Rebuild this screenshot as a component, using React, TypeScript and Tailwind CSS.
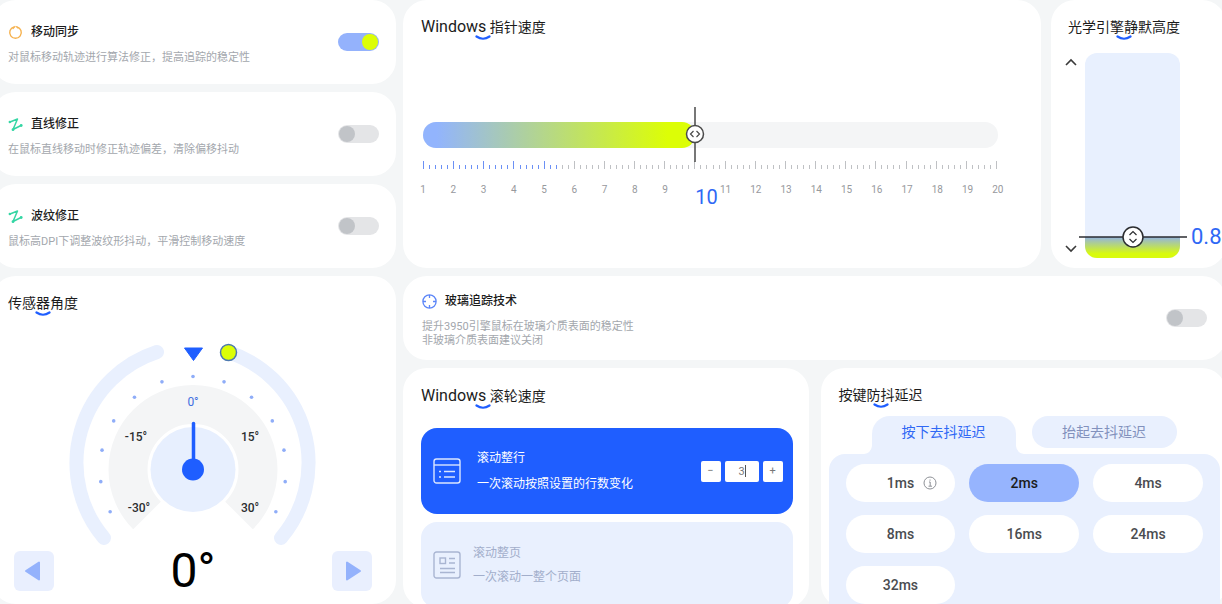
import { useState, type ReactNode } from "react";
import clsx from "clsx";

const SPEED_MIN = 1;
const SPEED_MAX = 20;
const MINOR_TICKS = 5;
const ticks = Array.from({ length: (SPEED_MAX - SPEED_MIN) * MINOR_TICKS + 1 }, (_, index) => index);
const speeds = Array.from({ length: SPEED_MAX }, (_, index) => index + 1);

const delays = ["1ms", "2ms", "4ms", "8ms", "16ms", "24ms", "32ms"];

const dialDots = [-117, -97.5, -78, -58.5, -39, -19.5, 0, 19.5, 39, 58.5, 78, 97.5, 117].map((angle) => {
  const rad = (angle * Math.PI) / 180;
  return { angle, x: 193 + 93 * Math.sin(rad), y: 469.5 - 93 * Math.cos(rad) };
});

export default function App() {
  return (
    <main className="flex h-screen gap-[7px] overflow-hidden bg-[#f4f6f7] font-[Roboto,'Noto_Sans_CJK_SC',sans-serif] text-[#1c1c1c]">
      <div className="-ml-2 flex w-[404px] shrink-0 flex-col gap-2">
        <ToggleCard icon={<SyncIcon />} title="移动同步" description="对鼠标移动轨迹进行算法修正，提高追踪的稳定性" defaultChecked />
        <ToggleCard icon={<LineIcon />} title="直线修正" description="在鼠标直线移动时修正轨迹偏差，清除偏移抖动" />
        <ToggleCard icon={<LineIcon />} title="波纹修正" description="鼠标高DPI下调整波纹形抖动，平滑控制移动速度" />
        <SensorAngle />
      </div>

      <div className="-mr-1 flex min-w-0 flex-1 flex-col gap-2">
        <div className="flex h-[268px] shrink-0 gap-2.5">
          <PointerSpeed />
          <LiftHeight />
        </div>
        <GlassTracking />
        <div className="grid flex-1 grid-cols-2 gap-3">
          <WheelSpeed />
          <Debounce />
        </div>
      </div>
    </main>
  );
}

function Card({ className, children }: { className?: string; children: ReactNode }) {
  return <section className={clsx("rounded-3xl bg-white", className)}>{children}</section>;
}

function CardTitle({ children }: { children: ReactNode }) {
  return (
    <h2 className="relative w-fit text-sm leading-6 whitespace-nowrap">
      {children}
      <svg className="absolute top-5 left-1/2 -ml-2 h-1.5 w-4" viewBox="0 0 16 6" fill="none" aria-hidden="true">
        <path d="M1.5 1.5Q8 6 14.5 1.5" stroke="#1f5eff" strokeWidth="2.2" strokeLinecap="round" />
      </svg>
    </h2>
  );
}

function Switch({ label, defaultChecked }: { label: string; defaultChecked?: boolean }) {
  return (
    <input
      type="checkbox"
      role="switch"
      aria-label={label}
      defaultChecked={defaultChecked}
      className="h-[18px] w-[41px] shrink-0 cursor-pointer appearance-none rounded-full bg-[#e4e5e7] p-px before:block before:size-4 before:rounded-full before:bg-[#c1c4c8] checked:bg-[#94b2fc] checked:before:ml-[23px] checked:before:bg-[#dcfe06]"
    />
  );
}

function ToggleCard({
  icon,
  title,
  description,
  defaultChecked,
}: {
  icon: ReactNode;
  title: string;
  description: ReactNode;
  defaultChecked?: boolean;
}) {
  return (
    <Card className="flex h-[84px] shrink-0 items-center justify-between pr-[17px] pl-4">
      <div className="pt-1">
        <h2 className="flex items-center gap-2 text-xs leading-[18px] font-medium">
          {icon}
          {title}
        </h2>
        <p className="mt-2.5 text-[11px] leading-[14px] text-[#a3a7ad]">{description}</p>
      </div>
      <Switch label={title} defaultChecked={defaultChecked} />
    </Card>
  );
}

function SensorAngle() {
  const [angle, setAngle] = useState(0);

  return (
    <Card className="flex-1 pt-[15px] pr-6 pl-4">
      <CardTitle>传感器角度</CardTitle>
      <div className="mt-[25px] pl-1.5">
        <svg className="mx-auto block h-[208px] w-[266px]" viewBox="60 340 266 208" fill="none" aria-hidden="true">
          <path d="M157 352A116.5 116.5 0 0 0 104 538" stroke="#e9f0fe" strokeWidth="14" strokeLinecap="round" />
          <path d="M228 352A116.5 116.5 0 0 1 281 538" stroke="#e9f0fe" strokeWidth="14" strokeLinecap="round" />
          <path d="M147 515.5A65 65 0 1 1 239 515.5" stroke="#f4f5f6" strokeWidth="39" />
          <circle cx="193" cy="469.5" r="42.5" fill="#e7effe" />
          {dialDots.map((dot) => (
            <circle key={dot.angle} cx={dot.x} cy={dot.y} r="1.8" fill="#8fadf8" />
          ))}
          <path d="M184.5 348H202.5L193.5 360.5Z" fill="#1f5eff" stroke="#1f5eff" strokeLinejoin="round" />
          <circle cx="228.5" cy="352.5" r="8" fill="#dcfe06" stroke="#4c79b0" strokeWidth="1.5" />
          <g transform={`rotate(${angle} 193 469.5)`}>
            <path d="M193.500 423.5V469" stroke="#1f5eff" strokeWidth="3.5" strokeLinecap="round" />
            <circle cx="193" cy="469.5" r="11" fill="#1f5eff" />
          </g>
          <g fill="#2b2d30" fontSize="12" fontWeight="500" textAnchor="middle">
            <text x="193" y="406" fill="#3f6fe0" fontWeight="400">0°</text>
            <text x="136" y="441">-15°</text>
            <text x="250" y="441">15°</text>
            <text x="139" y="512">-30°</text>
            <text x="250" y="512">30°</text>
          </g>
        </svg>
        <div className="mt-[3px] flex h-10 items-center justify-between">
          <AngleButton label="减小角度" path="M12 20L25 11.5V28.5Z" onClick={() => setAngle(Math.max(-30, angle - 1))} />
          <output className="text-5xl leading-10 text-black">{angle}°</output>
          <AngleButton label="增大角度" path="M28 20L15 11.5V28.5Z" onClick={() => setAngle(Math.min(30, angle + 1))} />
        </div>
      </div>
    </Card>
  );
}

function AngleButton({ label, path, onClick }: { label: string; path: string; onClick: () => void }) {
  return (
    <button type="button" aria-label={label} onClick={onClick} className="size-10 rounded-md bg-[#e9effe]">
      <svg viewBox="0 0 40 40" aria-hidden="true">
        <path d={path} fill="#94b2fc" stroke="#94b2fc" strokeWidth="2" strokeLinejoin="round" />
      </svg>
    </button>
  );
}

function PointerSpeed() {
  const [speed, setSpeed] = useState(10);
  const percent = ((speed - SPEED_MIN) / (SPEED_MAX - SPEED_MIN)) * 100;

  return (
    <Card className="min-w-0 flex-1 pt-[15px] pr-[43px] pl-[18px]">
      <CardTitle>
        <span className="text-base">Windows</span> 指针速度
      </CardTitle>
      <div className="mt-[83px] pl-0.5">
        <div className="relative h-[26px] rounded-full bg-[#f4f5f6]">
          <div className="h-full rounded-full bg-linear-to-r/srgb from-[#92b4fd] from-5% to-[#dcfe06] to-90%" style={{ width: `${percent}%` }} />
          <svg
            className="absolute -top-4 -ml-2.5 h-[58px] w-5"
            style={{ left: `${percent}%` }}
            viewBox="0 0 20 58"
            fill="none"
            stroke="#4a4a4a"
            aria-hidden="true"
          >
            <path d="M10 1V56" strokeWidth="1.5" />
            <circle cx="10" cy="28" r="8.5" fill="#fff" strokeWidth="1.5" />
            <path d="M8.500 25L5.500 28L8.500 31M11.500 25L14.500 28L11.500 31" strokeWidth="1.2" />
          </svg>
          <input
            type="range"
            aria-label="Windows 指针速度"
            min={SPEED_MIN}
            max={SPEED_MAX}
            value={speed}
            onChange={(event) => setSpeed(Number(event.target.value))}
            className="absolute inset-0 w-full cursor-pointer opacity-0"
          />
        </div>
        <div className="mt-[13px] flex h-2 items-end justify-between" aria-hidden="true">
          {ticks.map((tick) => (
            <span
              key={tick}
              className={clsx("w-px", tick % MINOR_TICKS === 0 ? "h-2" : "h-1", tick <= 22 ? "bg-[#6b90f5]" : "bg-[#bfc1c4]")}
            />
          ))}
        </div>
        <div className="mt-3 flex justify-between text-[10px] leading-[18px] text-[#97999d]">
          {speeds.map((value) => (
            <span key={value} className={clsx("flex w-0", value === speed ? "justify-start" : "justify-center")}>
              {value === speed ? <strong className="mt-1.5 text-xl leading-5 font-normal text-[#2f68f5]">{value}</strong> : value}
            </span>
          ))}
        </div>
      </div>
    </Card>
  );
}

function LiftHeight() {
  return (
    <Card className="w-[175px] shrink-0 pt-[15px] pl-[17px]">
      <CardTitle>光学引擎静默高度</CardTitle>
      <div className="mt-3.5 -ml-[3px] flex h-[205px] gap-2">
        <div className="flex flex-col justify-between py-[5px]">
          <StepButton label="升高" path="M1 7L6 2L11 7" />
          <StepButton label="降低" path="M1 1L6 6L11 1" />
        </div>
        <div className="relative flex w-[95px] flex-col justify-end">
          <div className="flex h-full flex-col justify-end overflow-hidden rounded-xl bg-[#e8f0fe]">
            <div className="h-[21px] bg-linear-to-b/srgb from-[#93b3e2] to-[#d9fb0c] to-80%" />
          </div>
          <svg className="absolute bottom-2.5 -left-1.5 h-[22px] w-[108px]" viewBox="0 0 108 22" fill="none" stroke="#2b2d30" aria-hidden="true">
            <path d="M0 11H108" strokeWidth="1.5" />
            <circle cx="54" cy="11" r="10" fill="#fff" strokeWidth="1.5" />
            <path d="M50.500 9L54 5.500L57.500 9M50.500 13L54 16.500L57.500 13" strokeWidth="1.2" />
          </svg>
          <output className="absolute bottom-2.5 left-[106px] text-[22px] leading-[22px] text-[#2f68f5]">0.8</output>
        </div>
      </div>
    </Card>
  );
}

function StepButton({ label, path }: { label: string; path: string }) {
  return (
    <button type="button" aria-label={label}>
      <svg className="block h-2 w-3" viewBox="0 0 12 8" fill="none" aria-hidden="true">
        <path d={path} stroke="#3a3a3a" strokeWidth="1.6" />
      </svg>
    </button>
  );
}

function GlassTracking() {
  return (
    <Card className="flex h-[84px] shrink-0 items-center justify-between px-[19px]">
      <div className="pt-1">
        <h2 className="flex items-center gap-2 text-xs leading-[18px] font-medium">
          <TargetIcon />
          玻璃追踪技术
        </h2>
        <p className="mt-2.5 text-[11px] leading-[14px] text-[#a3a7ad]">
          提升3950引擎鼠标在玻璃介质表面的稳定性
          <br />
          非玻璃介质表面建议关闭
        </p>
      </div>
      <Switch label="玻璃追踪技术" />
    </Card>
  );
}

function WheelSpeed() {
  const [lines, setLines] = useState(3);

  return (
    <Card className="pt-4 pr-4 pl-[18px]">
      <CardTitle>
        <span className="text-base">Windows</span> 滚轮速度
      </CardTitle>
      <div className="mt-5 space-y-2">
        <div className="flex h-[86px] items-center justify-between rounded-2xl bg-[#1f5eff] pr-2.5 pl-3 text-white">
          <label className="flex items-center gap-4 text-xs">
            <input type="radio" name="wheel" defaultChecked className="sr-only" />
            <LinesIcon />
            <span className="leading-[18px]">
              滚动整行
              <br />
              <span className="mt-2 block">一次滚动按照设置的行数变化</span>
            </span>
          </label>
          <div className="flex gap-1 text-[11px] text-[#777]">
            <button type="button" aria-label="减少行数" className="h-[21px] w-5 rounded-xs bg-white" onClick={() => setLines(Math.max(1, lines - 1))}>
              −
            </button>
            <div className="relative">
              <input
                aria-label="滚动行数"
                value={lines}
                onChange={(event) => setLines(Number(event.target.value) || 1)}
                className="h-[21px] w-[34px] rounded-xs bg-white text-center outline-none"
              />
              <span className="absolute top-1 left-5 h-3 w-px bg-[#555]" />
            </div>
            <button type="button" aria-label="增加行数" className="h-[21px] w-5 rounded-xs bg-white" onClick={() => setLines(lines + 1)}>
              +
            </button>
          </div>
        </div>
        <label className="flex h-[86px] items-center gap-3 rounded-2xl bg-[#e9f0fe] pl-3 text-xs text-[#a2aecb]">
          <input type="radio" name="wheel" className="sr-only" />
          <PageIcon />
          <span className="leading-[18px]">
            滚动整页
            <br />
            <span className="mt-1.5 block">一次滚动一整个页面</span>
          </span>
        </label>
      </div>
    </Card>
  );
}

function Debounce() {
  const [selected, setSelected] = useState("2ms");

  return (
    <Card className="flex flex-col pt-[15px] pr-1.5 pl-2">
      <div className="pl-2.5">
        <CardTitle>按键防抖延迟</CardTitle>
      </div>
      <div role="tablist" className="mt-[9px] flex h-[38px] items-start gap-4 pl-[43px] text-sm">
        <button type="button" role="tab" aria-selected="true" className="relative h-full w-36 rounded-t-[18px] bg-[#e9f0fe] pb-1.5 text-[#2f68f5]">
          按下去抖延迟
          <svg className="absolute bottom-0 -left-2 size-2" viewBox="0 0 8 8" aria-hidden="true">
            <path d="M8 0V8H0Q7 7 8 0Z" fill="#e9f0fe" />
          </svg>
          <svg className="absolute -right-2 bottom-0 size-2" viewBox="0 0 8 8" aria-hidden="true">
            <path d="M0 0V8H8Q1 7 0 0Z" fill="#e9f0fe" />
          </svg>
        </button>
        <button type="button" role="tab" aria-selected="false" className="h-8 w-[145px] rounded-full bg-[#e9f0fe] text-[#8291bd]">
          抬起去抖延迟
        </button>
      </div>
      <div role="tabpanel" className="grid flex-1 grid-cols-3 content-start gap-x-3.5 gap-y-[13px] rounded-t-2xl bg-[#e9f0fe] px-[17px] pt-2.5">
        {delays.map((delay) => (
          <button
            key={delay}
            type="button"
            aria-pressed={delay === selected}
            onClick={() => setSelected(delay)}
            className={clsx(
              "relative h-[38px] rounded-full text-sm font-medium",
              delay === selected ? "bg-[#96b4fe] text-[#1c1c1c]" : "bg-white text-[#4a4c50]",
            )}
          >
            {delay}
            {delay === "1ms" && <InfoIcon />}
          </button>
        ))}
      </div>
    </Card>
  );
}

function SyncIcon() {
  return (
    <svg className="size-[15px]" viewBox="0 0 15 15" fill="none" stroke="#f6b24f" aria-hidden="true">
      <path d="M9 1.9A5.800 5.800 0 1 1 6 1.900" strokeWidth="1.4" />
      <path d="M5 3.500L7 1.500M8.500 1.700L10 3" strokeWidth="1.2" strokeLinecap="round" />
    </svg>
  );
}

function LineIcon() {
  return (
    <svg className="size-[15px]" viewBox="0 0 15 15" fill="none" aria-hidden="true">
      <path d="M2 5L9.500 2L5 12.500L13 8.500" stroke="#35d6a4" strokeWidth="1.5" strokeLinecap="round" strokeLinejoin="round" />
      <circle cx="1.8" cy="5" r="1.2" fill="#35d6a4" />
      <circle cx="5" cy="12.7" r="1.4" fill="#35d6a4" />
      <circle cx="13.2" cy="8.5" r="1.4" fill="#35d6a4" />
    </svg>
  );
}

function TargetIcon() {
  return (
    <svg className="size-[15px]" viewBox="0 0 15 15" fill="none" stroke="#5c86f8" strokeWidth="1.3" aria-hidden="true">
      <circle cx="7.5" cy="7.5" r="6.6" />
      <path d="M7.500 1V4M7.500 11V14M1 7.500H4M11 7.500H14" />
    </svg>
  );
}

function LinesIcon() {
  return (
    <svg className="size-7" viewBox="0 0 28 28" fill="none" stroke="#dbe6ff" strokeWidth="1.4" aria-hidden="true">
      <rect x="1" y="2" width="26" height="24" rx="2.5" />
      <path d="M1 8H27" />
      <path d="M6 14.500H8M11 14.500H22M6 20H8M11 20H22" strokeWidth="1.6" />
    </svg>
  );
}

function PageIcon() {
  return (
    <svg className="size-7" viewBox="0 0 28 28" fill="none" stroke="#a9b5d2" strokeWidth="1.4" aria-hidden="true">
      <rect x="1" y="1" width="26" height="26" rx="2.5" />
      <rect x="7" y="7" width="5.5" height="5.5" />
      <path d="M16 7.500H22M16 12H22M7 17.500H22M7 21.500H22" />
    </svg>
  );
}

function InfoIcon() {
  return (
    <svg className="absolute top-3 right-[18px] size-3.5" viewBox="0 0 14 14" fill="none" stroke="#8e9197" aria-hidden="true">
      <circle cx="7" cy="7" r="6" />
      <path d="M6 6H7.200V10M5.500 10.200H9M7 3.500V4.700" />
    </svg>
  );
}
